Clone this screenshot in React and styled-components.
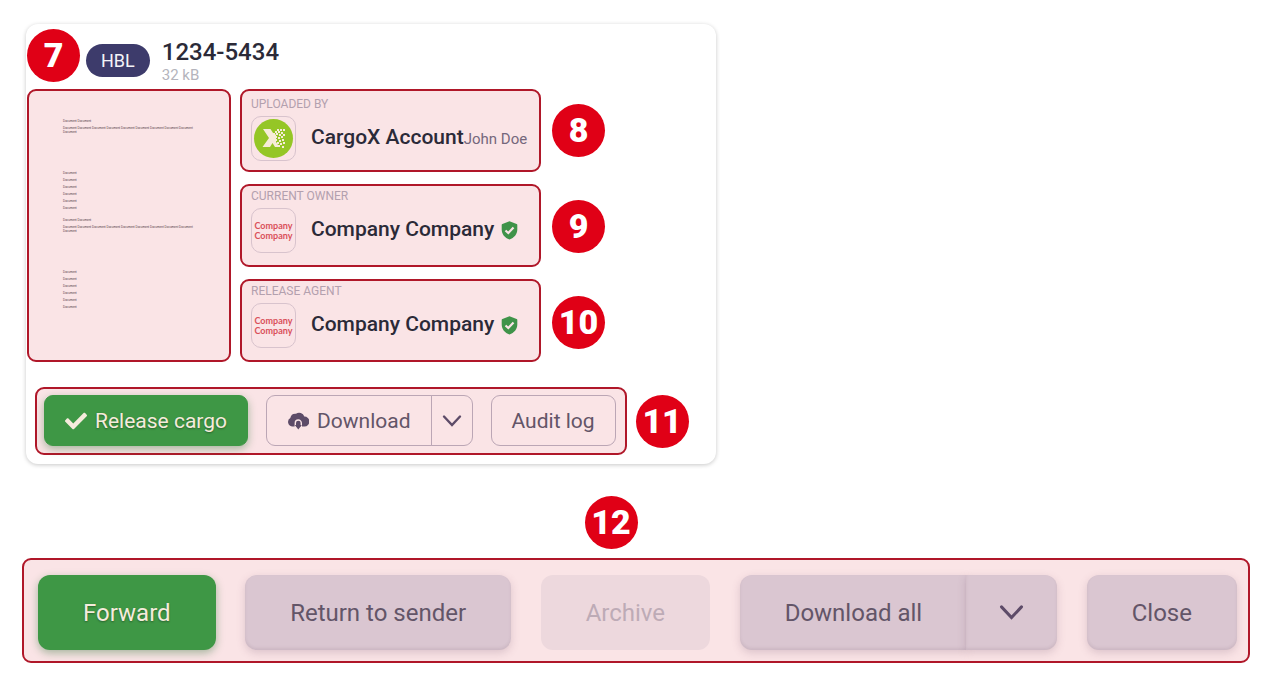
import React from "react";
import styled, { createGlobalStyle, css } from "styled-components";
import { FaCheck } from "react-icons/fa";

const GlobalStyle = createGlobalStyle`
	* {
		box-sizing: border-box;
	}
	body {
		margin: 0;
		background: #fff;
		color: #2b2a38;
		font-family: Roboto, "Liberation Sans", sans-serif;
	}
	button {
		font-family: inherit;
	}
`;

const highlight = css`
	background: #fae4e6;
	border: 2px solid #b01729;
	border-radius: 9px;
`;

const Page = styled.main`
	padding: 24px 29px 21px 22px;
`;

const Card = styled.article`
	max-width: 690px;
	margin-left: 4px;
	padding: 5px 1px 9px;
	border-radius: 12px;
	background: #fff;
	box-shadow: 0 1px 4px rgba(0, 0, 0, 0.22);
`;

const CardHeader = styled.header`
	display: flex;
	align-items: flex-start;
	height: 60px;
`;

const Marker = styled.span`
	flex: none;
	display: flex;
	align-items: center;
	justify-content: center;
	width: 53px;
	height: 53px;
	border-radius: 50%;
	background: #e00016;
	color: #fff;
	font-size: 34px;
	font-weight: 900;
	line-height: 53px;
`;

const TypePill = styled.span`
	margin: 15px 12px 0 6px;
	padding: 0 15px;
	border-radius: 17px;
	background: #3d3b6b;
	color: #f4f3f8;
	font-size: 18px;
	line-height: 33px;
`;

const DocumentTitle = styled.div`
	padding-top: 9px;
`;

const DocumentName = styled.h1`
	margin: 0;
	font-size: 24px;
	font-weight: 500;
	line-height: 28px;
`;

const FileSize = styled.p`
	margin: 0;
	color: #b4b4bc;
	font-size: 15px;
	line-height: 18px;
`;

const CardBody = styled.div`
	display: flex;
	gap: 9px;
	height: 273px;
`;

const Preview = styled.section`
	${highlight}
	flex: 0 0 204px;
	padding: 28px 32px 0 34px;
	color: #4e3842;
	font: 3px/4px "Liberation Sans", sans-serif;
`;

const PreviewBlock = styled.div`
	height: 99px;

	p {
		margin: 0 0 3px;
	}
	ul {
		margin: 36px 0 0;
		padding: 0;
		list-style: none;
		line-height: 7px;
	}
`;

const Parties = styled.div`
	display: flex;
	flex: 0 1 301px;
	flex-direction: column;
	gap: 12px;
`;

const PartyBox = styled.section`
	${highlight}
	flex: 0 0 83px;
	padding: 3px 9px 0;

	&:first-child {
		padding-top: 6px;
	}
`;

const PartyLabel = styled.h2`
	margin: 0 0 5px;
	color: #b3a0ae;
	font-size: 12px;
	font-weight: 400;
	line-height: 14px;
`;

const PartyRow = styled.div`
	display: flex;
	align-items: center;
	white-space: nowrap;
`;

const Avatar = styled.span`
	flex: none;
	display: flex;
	align-items: center;
	justify-content: center;
	width: 45px;
	height: 45px;
	margin-right: 15px;
	border: 1px solid #d8c3cd;
	border-radius: 10px;
	color: #d9505a;
	font: 700 9px/10px Lato, sans-serif;
	text-align: center;
	white-space: normal;
`;

const PartyName = styled.span`
	font-size: 21px;
	font-weight: 500;
	line-height: 40px;
	padding-bottom: 3px;
`;

const PartyUser = styled.span`
	color: #75677c;
	font-size: 15px;
`;

const ShieldIcon = styled.svg`
	margin-left: 7px;
`;

const MarkerColumn = styled.div`
	display: flex;
	flex-direction: column;
	gap: 43px;
	padding: 15px 0 0 2px;
`;

const CardFooter = styled.footer`
	display: flex;
	align-items: center;
	gap: 9px;
	margin: 25px 0 0 8px;
`;

const CardActions = styled.div`
	${highlight}
	display: flex;
	gap: 18px;
	height: 68px;
	padding: 6px 9px 7px 7px;
`;

const Button = styled.button`
	display: flex;
	align-items: center;
	gap: 8px;
	height: 51px;
	padding: 0 20px;
	border: 1px solid #bba6b5;
	border-radius: 9px;
	background: transparent;
	color: #635568;
	font-size: 21px;
	white-space: nowrap;
	cursor: pointer;

	${(props) =>
		props.$primary &&
		css`
			border-color: #3e9745;
			background: #3e9745;
			color: #f5ebdc;
			text-shadow: 0 1px 2px rgba(0, 0, 0, 0.35);
			box-shadow: 0 3px 8px rgba(40, 110, 50, 0.4);
		`}
`;

const BarButton = styled(Button)`
	height: 75px;
	padding: 0 45px;
	border: 0;
	border-radius: 12px;
	font-size: 24px;

	${(props) =>
		!props.$primary &&
		css`
			background: #dac6d1;
			box-shadow: 0 3px 8px rgba(120, 80, 110, 0.22),
				inset 0 -2px 3px rgba(90, 60, 80, 0.1);
		`}

	&:disabled {
		background: #edd8dd;
		color: #bdabb6;
		box-shadow: none;
		cursor: default;
	}
`;

const SplitButton = styled.div`
	display: flex;

	button:first-child {
		border-top-right-radius: 0;
		border-bottom-right-radius: 0;
	}
	button:last-child {
		margin-left: -1px;
		padding: 0 ${(props) => (props.$large ? "33px" : "10px")};
		border-top-left-radius: 0;
		border-bottom-left-radius: 0;
	}
`;

const MarkerRow = styled.div`
	display: flex;
	justify-content: center;
	margin-top: 32px;
	padding-right: 50px;
`;

const ActionBar = styled.nav`
	${highlight}
	display: flex;
	justify-content: space-between;
	margin-top: 9px;
	padding: 15px 11px 11px 14px;
`;

const Chevron = ({ size }) => (
	<svg width={size} height={size} viewBox="0 0 20 20" aria-hidden="true">
		<path
			d="M2 5.500L10 14L18 5.500"
			fill="none"
			stroke="#5d4b68"
			strokeWidth="2.400"
			strokeLinecap="round"
		/>
	</svg>
);

const Shield = () => (
	<ShieldIcon width="17" height="19" viewBox="0 0 17 19" aria-label="Verified">
		<path
			fill="#3f9349"
			d="M8.500 0.300L15.600 3Q16.300 3.200 16.300 4V8.500C16.300 13.200 13.200 16.800 8.500 18.600C3.800 16.800 0.700 13.200 0.700 8.500V4Q0.700 3.200 1.400 3Z"
		/>
		<path
			d="M4.500 9.500L7.300 12L12.500 6.500"
			fill="none"
			stroke="#fae4e6"
			strokeWidth="2.200"
		/>
	</ShieldIcon>
);

const CloudDownload = () => (
	<svg width="22" height="18" viewBox="0 0 22 18" aria-hidden="true">
		<path
			fill="#5d4b68"
			d="M5 14.500A4.600 4.600 0 0 1 3.300 6A5.300 5.300 0 0 1 9 1.800A5.500 5.500 0 0 1 17.300 4.500A5 5 0 0 1 17.500 14.500Z"
		/>
		<path
			d="M8.300 15V11A3 3 0 0 1 14.300 11V15"
			fill="none"
			stroke="#fae4e6"
			strokeWidth="1.400"
		/>
		<path fill="#5d4b68" d="M10.300 9.500H12.300V13H14.800L11.300 17.500L7.800 13H10.300Z" />
	</svg>
);

// pixels that break away from the right side of the X
const logoPixels = [
	[24, 11], [27, 11], [30, 11], [22, 13], [25, 13], [28, 14], [20, 15],
	[23, 15], [26, 16], [30, 16], [22, 18], [25, 19], [28, 18], [22, 21],
	[26, 22], [29, 21], [24, 24], [27, 25], [30, 24], [25, 27], [29, 28],
];

const CargoLogo = () => (
	<svg width="41" height="41" viewBox="0 0 41 41" aria-label="CargoX">
		<circle cx="20.500" cy="20.500" r="19.500" fill="#95c626" />
		<path
			fill="#f7ecd9"
			d="M10 11H17.500L21 16.500H23V24L25 27V29H22L19.500 25L17 29H9.500L16 20Z"
		/>
		{logoPixels.map(([x, y]) => (
			<rect key={`${x}-${y}`} x={x} y={y} width="2" height="2" fill="#f7ecd9" />
		))}
	</svg>
);

const CompanyAvatar = () => <Avatar>Company Company</Avatar>;

const previewLine =
	"Document Document Document Document Document Document Document Document Document Document";

const Party = ({ label, name, user, avatar, verified }) => (
	<PartyBox>
		<PartyLabel>{label}</PartyLabel>
		<PartyRow>
			{avatar}
			<PartyName>{name}</PartyName>
			{user && <PartyUser>{user}</PartyUser>}
			{verified && <Shield />}
		</PartyRow>
	</PartyBox>
);

const App = () => (
	<>
		<GlobalStyle />
		<Page>
			<Card>
				<CardHeader>
					<Marker>7</Marker>
					<TypePill>HBL</TypePill>
					<DocumentTitle>
						<DocumentName>1234-5434</DocumentName>
						<FileSize>32 kB</FileSize>
					</DocumentTitle>
				</CardHeader>
				<CardBody>
					<Preview>
						{[0, 1].map((block) => (
							<PreviewBlock key={block}>
								<p>Document Document</p>
								<p>{previewLine}</p>
								<ul>
									{[0, 1, 2, 3, 4, 5].map((line) => (
										<li key={line}>Document</li>
									))}
								</ul>
							</PreviewBlock>
						))}
					</Preview>
					<Parties>
						<Party
							label="UPLOADED BY"
							name="CargoX Account"
							user="John Doe"
							avatar={
								<Avatar>
									<CargoLogo />
								</Avatar>
							}
						/>
						<Party
							label="CURRENT OWNER"
							name="Company Company"
							avatar={<CompanyAvatar />}
							verified
						/>
						<Party
							label="RELEASE AGENT"
							name="Company Company"
							avatar={<CompanyAvatar />}
							verified
						/>
					</Parties>
					<MarkerColumn>
						<Marker>8</Marker>
						<Marker>9</Marker>
						<Marker>10</Marker>
					</MarkerColumn>
				</CardBody>
				<CardFooter>
					<CardActions>
						<Button type="button" $primary>
							<FaCheck size={22} />
							Release cargo
						</Button>
						<SplitButton>
							<Button type="button">
								<CloudDownload />
								Download
							</Button>
							<Button type="button" aria-label="More download options">
								<Chevron size={20} />
							</Button>
						</SplitButton>
						<Button type="button">Audit log</Button>
					</CardActions>
					<Marker>11</Marker>
				</CardFooter>
			</Card>
			<MarkerRow>
				<Marker>12</Marker>
			</MarkerRow>
			<ActionBar>
				<BarButton type="button" $primary>
					Forward
				</BarButton>
				<BarButton type="button">Return to sender</BarButton>
				<BarButton type="button" disabled>
					Archive
				</BarButton>
				<SplitButton $large>
					<BarButton type="button">Download all</BarButton>
					<BarButton type="button" aria-label="More download options">
						<Chevron size={25} />
					</BarButton>
				</SplitButton>
				<BarButton type="button">Close</BarButton>
			</ActionBar>
		</Page>
	</>
);

export default App;
